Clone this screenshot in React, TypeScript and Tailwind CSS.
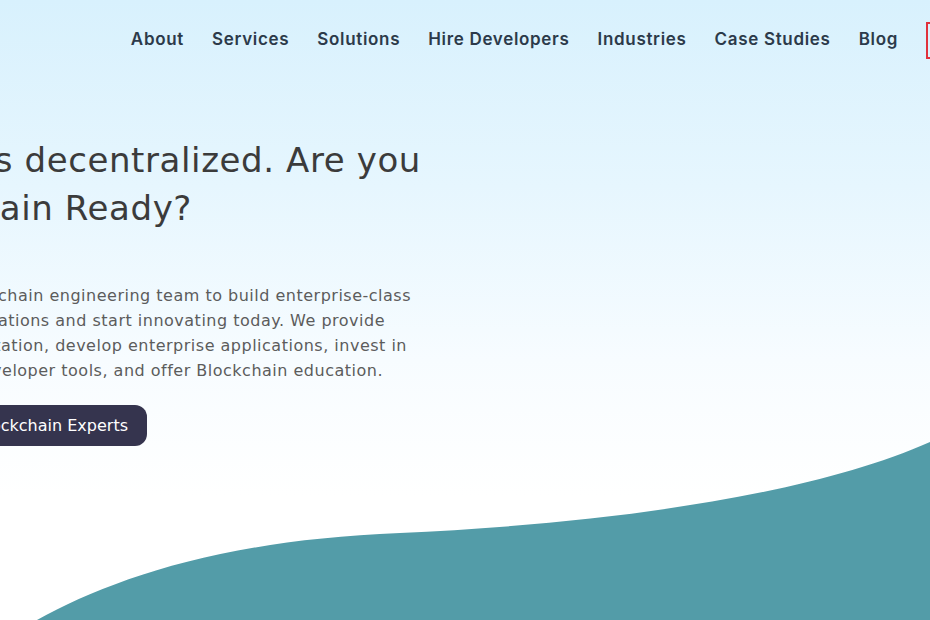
const navItems = ['About', 'Services', 'Solutions', 'Hire Developers', 'Industries', 'Case Studies', 'Blog'];

// Lines are anchored on their right end: the page is cut off on the left.
const Line = ({ text, widthClass }: { text: string; widthClass: string }) => (
  <div className={`flex justify-end ${widthClass}`}>
    <span className="whitespace-nowrap">{text}</span>
  </div>
);

const Wave = () => (
  <svg
    className="absolute bottom-0 left-0"
    width="930"
    height="190"
    viewBox="0 0 930 190"
    preserveAspectRatio="none"
  >
    <path
      d="M37 190 C110 150 220 110 400 103 C580 95 800 70 930 12 L930 190 Z"
      fill="#539ca8"
    />
  </svg>
);

const App = () => {
  return (
    <div
      className="relative h-[620px] w-[930px] overflow-hidden bg-[linear-gradient(180deg,#d8f1fd_0%,#e6f6fe_30%,#f7fcff_58%,#ffffff_80%)]"
      style={{ fontFamily: '"DejaVu Sans", sans-serif' }}
    >
      <header className="flex h-[80px] items-center justify-end gap-[28px] font-[Inter,sans-serif]">
        {navItems.map((item) => (
          <a key={item} className="whitespace-nowrap text-[17px] font-semibold tracking-[0.04em] text-[#2c3a4a]">
            {item}
          </a>
        ))}
        <button
          type="button"
          className="-mr-[120px] flex h-[37px] w-[124px] shrink-0 items-center justify-center border-2 border-[#e0323c] text-[15px] font-semibold text-[#e0323c]"
        >
          Contact Us
        </button>
      </header>

      <main className="flex flex-col">
        <h1 className="mt-[56px] flex flex-col text-[34px] font-normal leading-[48px] tracking-[0.6px] text-[#3b3b3b]">
          <Line text="The world is decentralized. Are you" widthClass="w-[421px]" />
          <Line text="Blockchain Ready?" widthClass="w-[192px]" />
        </h1>

        <div className="mt-[51px] flex flex-col text-[16px] leading-[25px] tracking-[0.5px] text-[#5c5c5c]">
          <Line text="Hire our Blockchain engineering team to build enterprise-class" widthClass="w-[411px]" />
          <Line text="Blockchain applications and start innovating today. We provide" widthClass="w-[385px]" />
          <Line text="Blockchain consultation, develop enterprise applications, invest in" widthClass="w-[407px]" />
          <Line text="Blockchain developer tools, and offer Blockchain education." widthClass="w-[383px]" />
        </div>

        <div className="mt-[22px] flex w-[147px] justify-end">
          <button
            type="button"
            className="flex h-[41px] shrink-0 items-center whitespace-nowrap rounded-[12px] bg-[#35344e] px-[19px] text-[16px] font-normal text-white"
          >
            Hire Blockchain Experts
          </button>
        </div>
      </main>

      <Wave />
    </div>
  );
};

export default App;
